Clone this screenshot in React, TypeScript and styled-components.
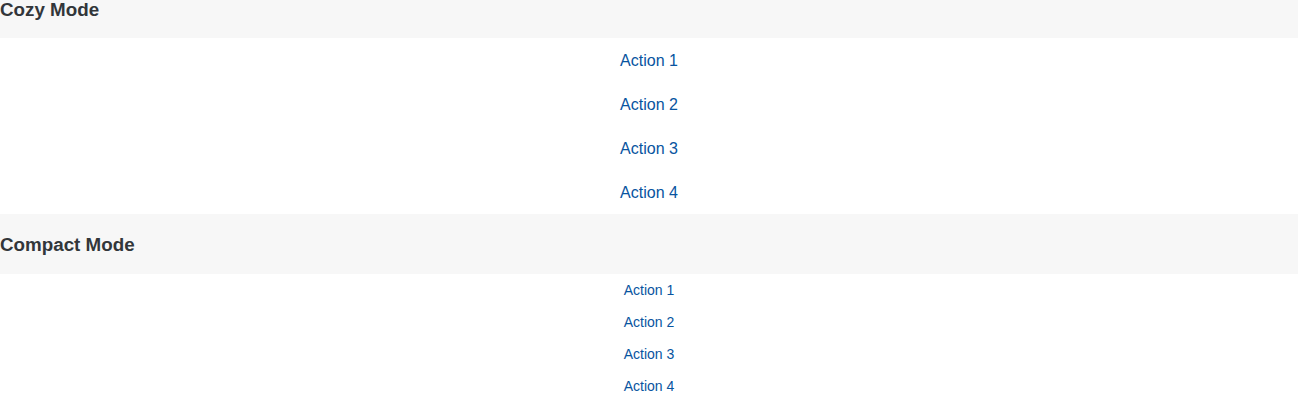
import styled, { createGlobalStyle } from 'styled-components'

const GlobalStyle = createGlobalStyle`
  html, body {
    margin: 0;
    padding: 0;
    background: #ffffff;
    font-family: "Liberation Sans", Arial, Helvetica, sans-serif;
  }
`

const actions = ['Action 1', 'Action 2', 'Action 3', 'Action 4']

type Density = 'cozy' | 'compact'

const Section = styled.section`
  display: flex;
  flex-direction: column;
`

const Header = styled.h3<{ $density: Density }>`
  margin: 0;
  background: #f7f7f7;
  color: #32363a;
  font-size: 18.8px;
  font-weight: 700;
  line-height: 20px;
  display: flex;
  align-items: ${(p) => (p.$density === 'cozy' ? 'flex-start' : 'center')};
  height: ${(p) => (p.$density === 'cozy' ? '38px' : '60px')};
  padding-top: ${(p) => (p.$density === 'cozy' ? '0' : '2px')};
  box-sizing: border-box;
`

const ActionList = styled.div`
  display: flex;
  flex-direction: column;
`

const ActionButton = styled.button<{ $density: Density }>`
  border: none;
  background: transparent;
  font-family: inherit;
  color: #0854a0;
  font-size: ${(p) => (p.$density === 'cozy' ? '16px' : '14px')};
  height: ${(p) => (p.$density === 'cozy' ? '44px' : '32px')};
  display: flex;
  align-items: center;
  justify-content: center;
  padding: ${(p) => (p.$density === 'cozy' ? '2px 0 0' : '0')};
  cursor: pointer;
`

const ModeBlock = ({ title, density }: { title: string; density: Density }) => (
  <Section>
    <Header $density={density}>{title}</Header>
    <ActionList>
      {actions.map((a) => (
        <ActionButton key={a} $density={density}>
          {a}
        </ActionButton>
      ))}
    </ActionList>
  </Section>
)

export default function App() {
  return (
    <>
      <GlobalStyle />
      <ModeBlock title="Cozy Mode" density="cozy" />
      <ModeBlock title="Compact Mode" density="compact" />
    </>
  )
}
